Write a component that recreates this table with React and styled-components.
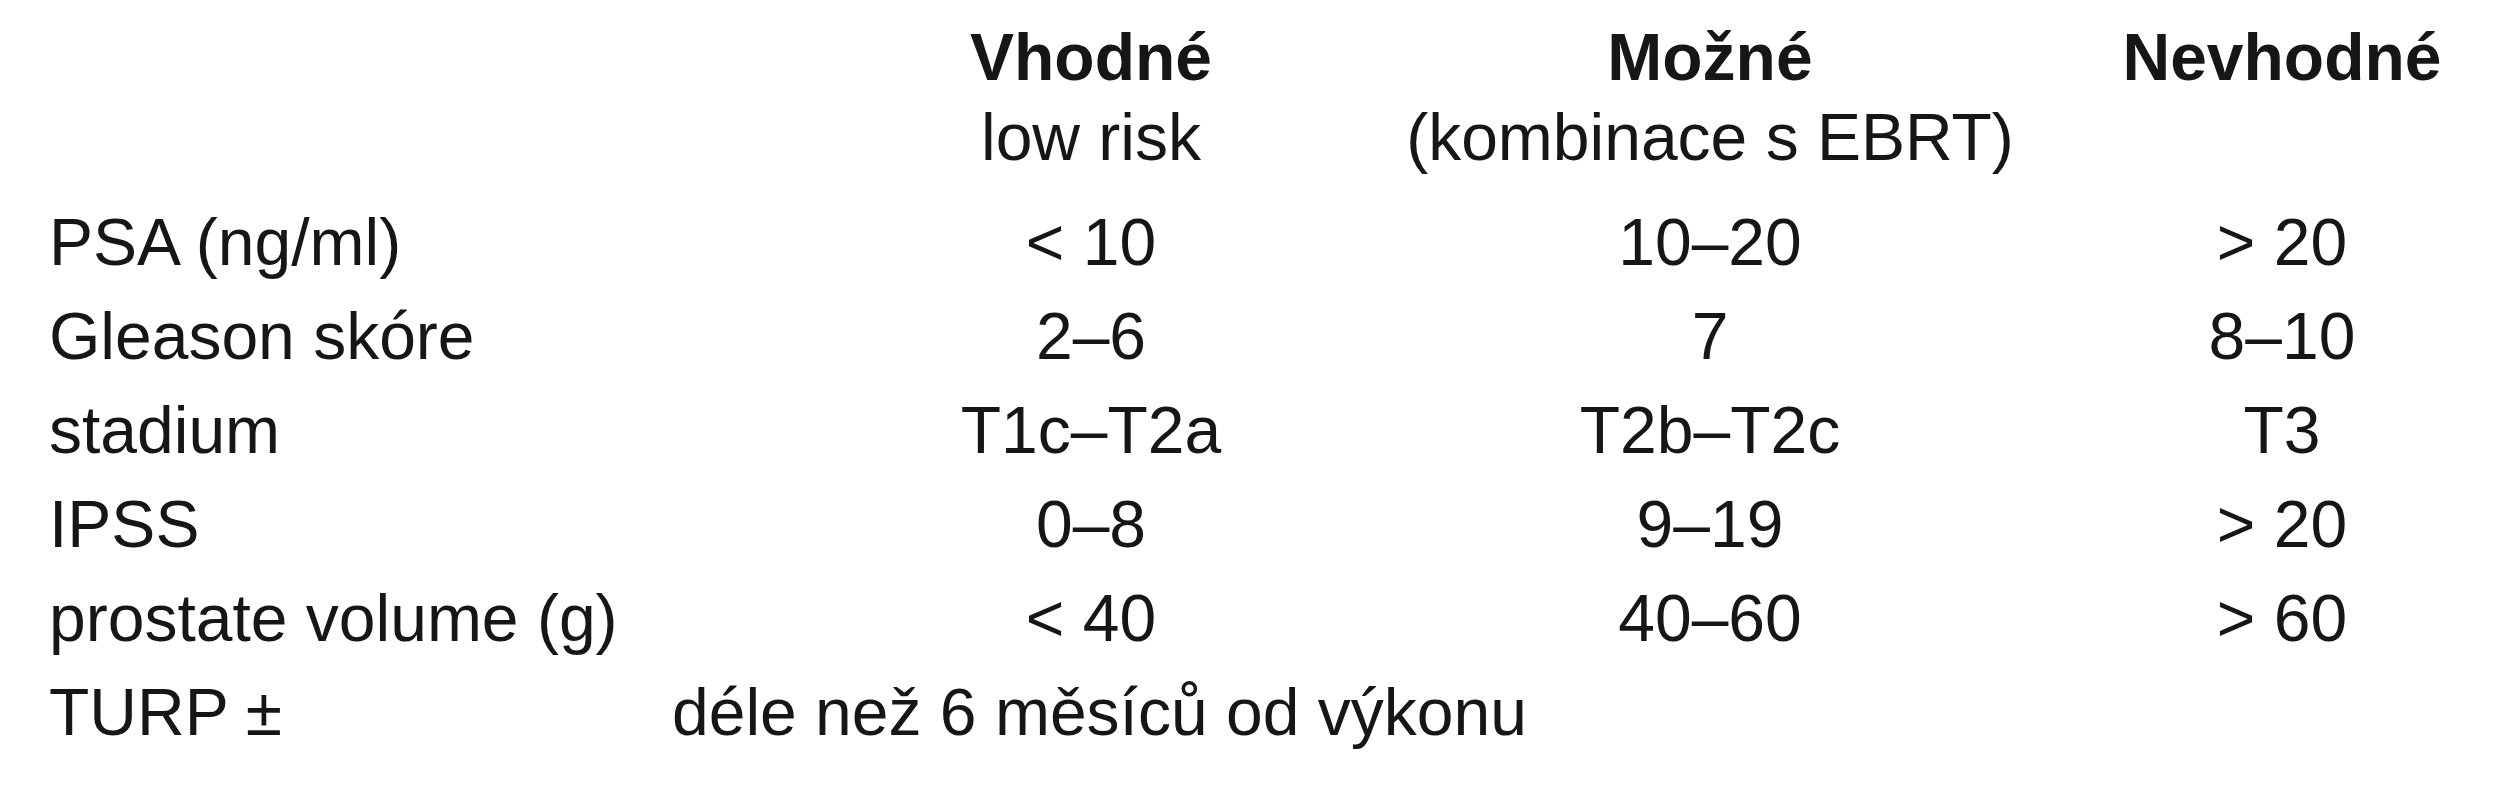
import styled, { createGlobalStyle } from "styled-components";

const GlobalStyle = createGlobalStyle`
  html, body {
    margin: 0;
    padding: 0;
    background: #ffffff;
  }
  body {
    font-family: "Liberation Sans", Arial, sans-serif;
    color: #161616;
  }
`;

const columns = [
  { title: "Vhodné", subtitle: "low risk" },
  { title: "Možné", subtitle: "(kombinace s EBRT)" },
  { title: "Nevhodné", subtitle: "" },
];

const rows = [
  { label: "PSA (ng/ml)", values: ["< 10", "10–20", "> 20"] },
  { label: "Gleason skóre", values: ["2–6", "7", "8–10"] },
  { label: "stadium", values: ["T1c–T2a", "T2b–T2c", "T3"] },
  { label: "IPSS", values: ["0–8", "9–19", "> 20"] },
  { label: "prostate volume (g)", values: ["< 40", "40–60", "> 60"] },
];

const App = () => {
  return (
    <>
      <GlobalStyle />
      <Table>
        <HeadRow>
          <Blank />
          {columns.map((c) => (
            <HeadCell key={c.title}>
              <HeadTitle>{c.title}</HeadTitle>
              <HeadSub>{c.subtitle || "\u00a0"}</HeadSub>
            </HeadCell>
          ))}
        </HeadRow>
        {rows.map((r) => (
          <Row key={r.label}>
            <Label>{r.label}</Label>
            {r.values.map((v, i) => (
              <Cell key={i}>{v}</Cell>
            ))}
          </Row>
        ))}
        <Row>
          <NoteLabel>TURP ±</NoteLabel>
          <Note>déle než 6 měsíců od výkonu</Note>
        </Row>
      </Table>
    </>
  );
};
export default App;

// Styled components

const Table = styled.div`
  display: flex;
  flex-direction: column;
  padding: 17px 0 0 49px;
  font-size: 66px;
`;

const grid = `
  display: grid;
  grid-template-columns: 623px 208px 422px 816px 328px;
`;

const HeadRow = styled.div`
  ${grid}
  line-height: 80px;
  margin-bottom: 18px;
`;

const Blank = styled.div`
  grid-column: 1 / 3;
`;

const HeadCell = styled.div`
  display: flex;
  flex-direction: column;
  align-items: center;
  white-space: nowrap;
`;

const HeadTitle = styled.div`
  font-weight: bold;
`;

const HeadSub = styled.div``;

const Row = styled.div`
  ${grid}
  line-height: 94px;
`;

const Label = styled.div`
  grid-column: 1 / 3;
  white-space: nowrap;
`;

const NoteLabel = styled.div`
  grid-column: 1 / 2;
  white-space: nowrap;
`;

const Cell = styled.div`
  text-align: center;
  white-space: nowrap;
`;

const Note = styled.div`
  grid-column: 2 / 6;
  white-space: nowrap;
`;
